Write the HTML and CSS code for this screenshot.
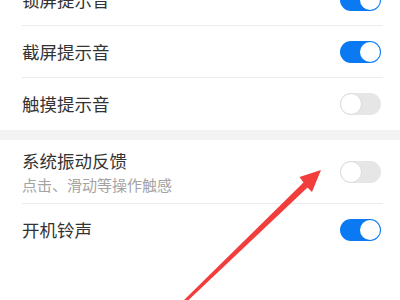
FILE: index.html
```html
<!DOCTYPE html>
<html lang="zh">
<head>
<meta charset="utf-8">
<link rel="stylesheet" href="styles.css">
</head>
<body>
<div class="screen">
  <div class="group first">
    <div class="row"><div class="inner"><span class="title">锁屏提示音</span><span class="switch on"><span class="knob"></span></span></div></div>
    <div class="row"><div class="inner"><span class="title">截屏提示音</span><span class="switch on"><span class="knob"></span></span></div></div>
    <div class="row last"><div class="inner"><span class="title">触摸提示音</span><span class="switch off"><span class="knob"></span></span></div></div>
  </div>
  <div class="gap"></div>
  <div class="group">
    <div class="row tall"><div class="inner">
      <div class="texts"><span class="title">系统振动反馈</span><span class="sub">点击、滑动等操作触感</span></div>
      <span class="switch off"><span class="knob"></span></span>
    </div></div>
    <div class="row last"><div class="inner"><span class="title">开机铃声</span><span class="switch on"><span class="knob"></span></span></div></div>
  </div>
  <svg class="arrow" width="400" height="300" viewBox="0 0 400 300">
    <polygon points="183,301 187.5,301 307.5,187.5 312,192 321,170 299.5,177 303.5,182.5" fill="#f23d3d"/>
  </svg>
</div>
</body>
</html>
```
FILE: styles.css
```css
html, body {
  margin: 0;
  padding: 0;
  background: #ffffff;
}
.screen {
  position: relative;
  width: 400px;
  height: 300px;
  overflow: hidden;
  font-family: "Noto Sans CJK SC", "Noto Sans", sans-serif;
  background: #ffffff;
}
.group.first {
  margin-top: -26px;
}
.row {
  height: 52px;
}
.row .inner {
  height: 51px;
  margin: 0 17px 0 22px;
  padding-right: 2px;
  border-bottom: 1px solid #ececec;
  display: flex;
  align-items: center;
  justify-content: space-between;
}
.row.last .inner {
  border-bottom: none;
  height: 52px;
}
.row.tall {
  height: 64px;
}
.row.tall .inner {
  height: 63px;
}
.gap {
  height: 10px;
  background: #f3f3f3;
}
.title {
  font-size: 17.5px;
  color: #333333;
  line-height: 22px;
}
.texts {
  display: flex;
  flex-direction: column;
  gap: 3px;
  padding-top: 2px;
}
.sub {
  font-size: 15px;
  color: #a3a3a3;
  line-height: 20px;
}
.switch {
  position: relative;
  width: 41px;
  height: 22px;
  border-radius: 11px;
  box-sizing: border-box;
  flex: none;
}
.switch.on {
  background: #0b7af2;
}
.switch.off {
  background: #e6e6e6;
}
.knob {
  position: absolute;
  top: 1px;
  width: 20px;
  height: 20px;
  border-radius: 50%;
  background: #ffffff;
  box-sizing: border-box;
}
.switch.on .knob {
  right: 1px;
}
.switch.off .knob {
  left: 0;
  top: 0;
  width: 22px;
  height: 22px;
  border: 1px solid #dcdcdc;
}
.arrow {
  position: absolute;
  left: 0;
  top: 0;
}
```
